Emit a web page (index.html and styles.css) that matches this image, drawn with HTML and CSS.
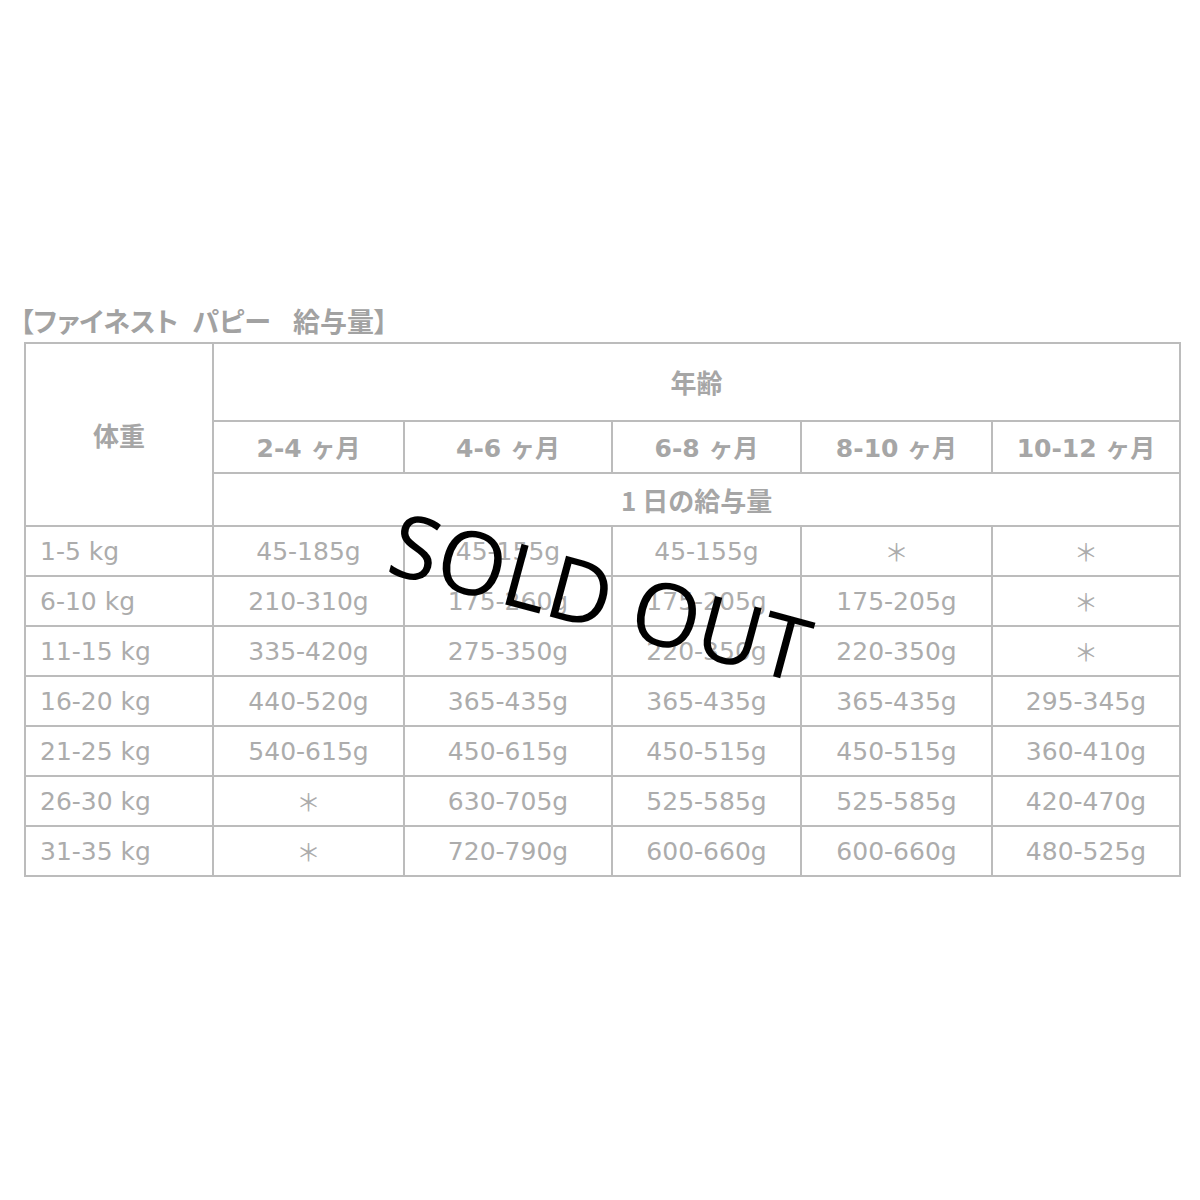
FILE: index.html
```html
<!DOCTYPE html>
<html lang="ja">
<head>
<meta charset="utf-8">
<title>ファイネスト パピー 給与量</title>
<link rel="stylesheet" href="styles.css">
</head>
<body>
<div class="page">
  <div class="sheet">
    <h1 class="title">【ファイネスト パピー <span class="gap"></span>給与量】</h1>
    <table class="feed">
      <colgroup>
        <col class="c1"><col class="c2"><col class="c3"><col class="c4"><col class="c5"><col class="c6">
      </colgroup>
      <tr class="h1">
        <th rowspan="3" class="weight-head">体重</th>
        <th colspan="5">年齢</th>
      </tr>
      <tr class="h2">
        <th>2-4 ヶ月</th>
        <th>4-6 ヶ月</th>
        <th>6-8 ヶ月</th>
        <th>8-10 ヶ月</th>
        <th>10-12 ヶ月</th>
      </tr>
      <tr class="h3">
        <th colspan="5">1 日の給与量</th>
      </tr>
      <tr><td class="w">1-5 kg</td><td>45-185g</td><td>45-155g</td><td>45-155g</td><td class="star">＊</td><td class="star">＊</td></tr>
      <tr><td class="w">6-10 kg</td><td>210-310g</td><td>175-260g</td><td>175-205g</td><td>175-205g</td><td class="star">＊</td></tr>
      <tr><td class="w">11-15 kg</td><td>335-420g</td><td>275-350g</td><td>220-350g</td><td>220-350g</td><td class="star">＊</td></tr>
      <tr><td class="w">16-20 kg</td><td>440-520g</td><td>365-435g</td><td>365-435g</td><td>365-435g</td><td>295-345g</td></tr>
      <tr><td class="w">21-25 kg</td><td>540-615g</td><td>450-615g</td><td>450-515g</td><td>450-515g</td><td>360-410g</td></tr>
      <tr><td class="w">26-30 kg</td><td class="star">＊</td><td>630-705g</td><td>525-585g</td><td>525-585g</td><td>420-470g</td></tr>
      <tr><td class="w">31-35 kg</td><td class="star">＊</td><td>720-790g</td><td>600-660g</td><td>600-660g</td><td>480-525g</td></tr>
    </table>
    <div class="soldout">SOLD OUT</div>
  </div>
</div>
</body>
</html>
```

FILE: styles.css
```css
html, body {
  margin: 0;
  padding: 0;
  background: #ffffff;
}

.page {
  width: 1200px;
  height: 1200px;
  padding-top: 300px;
  box-sizing: border-box;
  font-family: "DejaVu Sans", "Noto Sans CJK JP", sans-serif;
  color: #a8a8a8;
}

.sheet {
  position: relative;
  padding-left: 24px;
}

.title {
  display: flex;
  align-items: center;
  margin: 0 0 0 -4px;
  height: 42px;
  font-family: "Noto Sans CJK JP", sans-serif;
  font-feature-settings: "palt" 1;
  font-size: 27px;
  line-height: 40px;
  font-weight: 700;
  color: #a2a2a2;
  white-space: pre;
  word-spacing: 8px;
}

.title .gap {
  display: inline-block;
  width: 8px;
}

.feed {
  border-collapse: collapse;
  table-layout: fixed;
  width: 1155px;
}

.c1 { width: 188px; }
.c2 { width: 191px; }
.c3 { width: 208px; }
.c4 { width: 189px; }
.c5 { width: 191px; }
.c6 { width: 188px; }

.feed th,
.feed td {
  border: 2px solid #bcbcbc;
  padding: 0;
  text-align: center;
  vertical-align: middle;
  line-height: 1;
}

.feed th {
  font-size: 25px;
  font-weight: 700;
  color: #a6a6a6;
}

.feed td {
  font-size: 25px;
  font-weight: 400;
  color: #acacac;
  height: 48px;
}

.feed .weight-head {
  padding-top: 0;
  font-family: "Noto Sans CJK JP", sans-serif;
  font-size: 26px;
}

.feed tr.h1 th { height: 76px; }
.feed tr.h1 th:not(.weight-head),
.feed tr.h3 th {
  font-family: "Noto Sans CJK JP", sans-serif;
  font-size: 26px;
}
.feed tr.h2 th { height: 48px; padding-top: 2px; }
.feed tr.h3 th { height: 51px; }

.feed td.w {
  text-align: left;
  padding-left: 14px;
}

.feed td.star {
  font-family: "Noto Sans CJK JP", sans-serif;
  font-size: 24px;
}

.soldout {
  position: absolute;
  left: 376px;
  top: 251px;
  width: 450px;
  text-align: center;
  font-family: "Open Sans", "DejaVu Sans", sans-serif;
  font-size: 88px;
  font-weight: 400;
  line-height: 1;
  color: #000000;
  transform: rotate(15deg);
  transform-origin: center center;
  white-space: nowrap;
}
```
